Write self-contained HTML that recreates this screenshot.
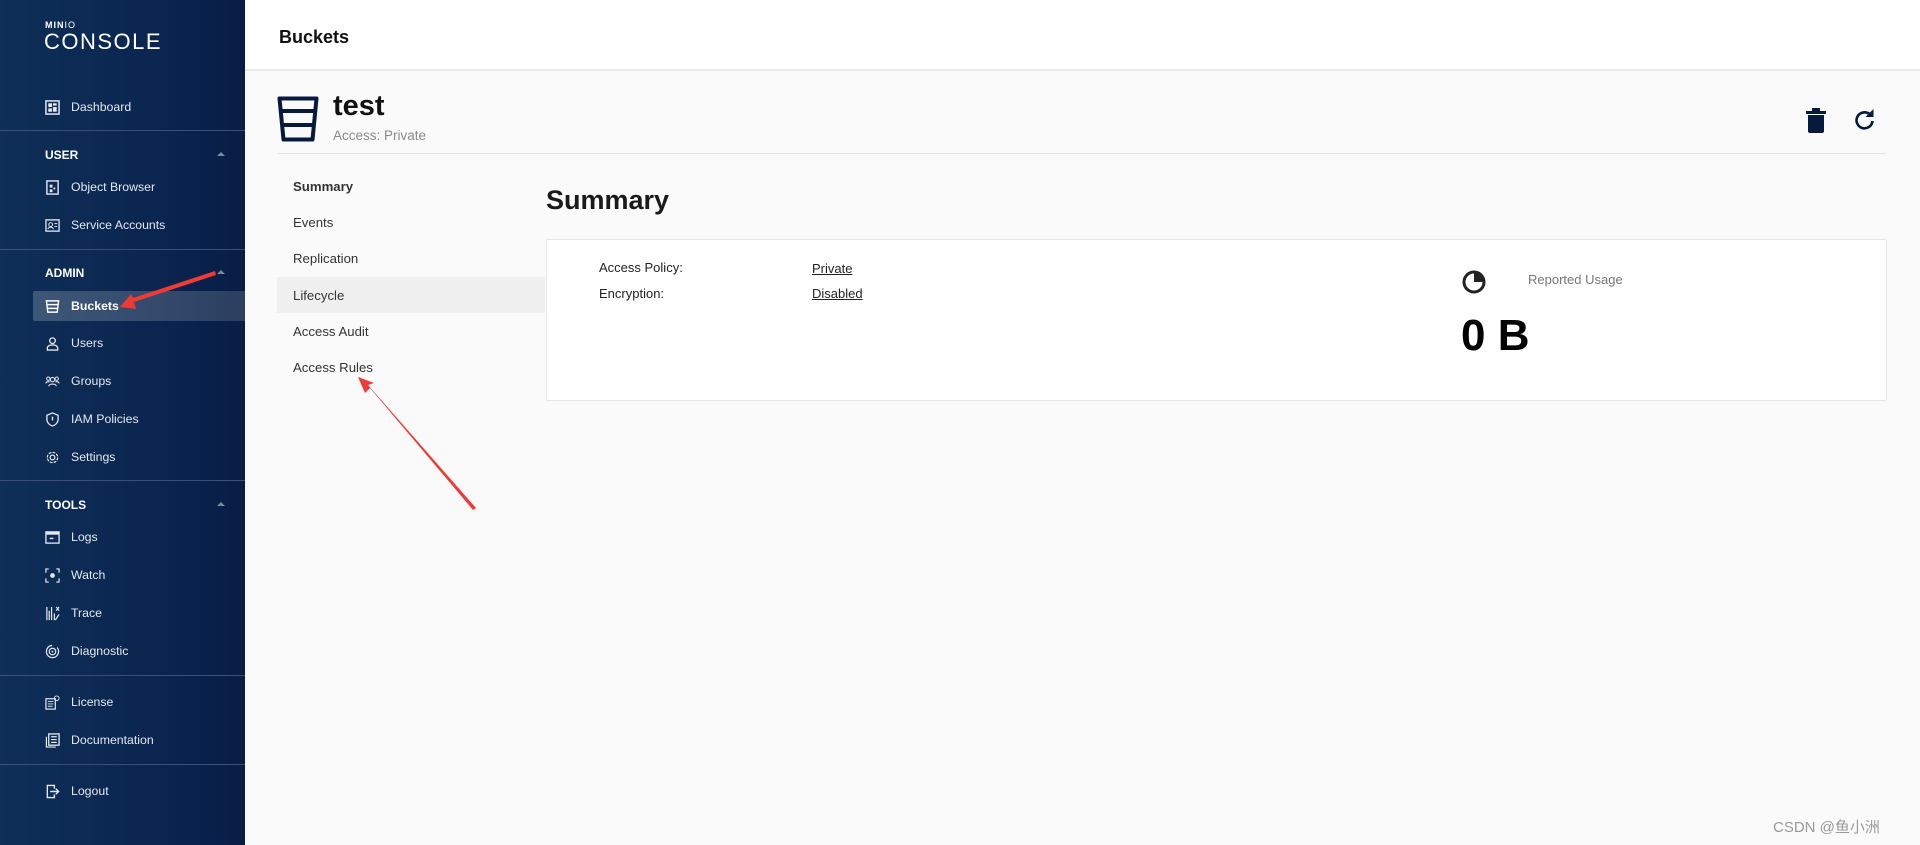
<!DOCTYPE html>
<html><head><meta charset="utf-8"><style>
*{margin:0;padding:0;box-sizing:border-box}
body{width:1920px;height:845px;overflow:hidden;background:#fafafa;font-family:"Liberation Sans","Noto Sans CJK SC",sans-serif;position:relative;color:#222}
.sb{position:absolute;left:0;top:0;width:245px;height:845px;background:linear-gradient(90deg,#0e2f57 0%,#0a2650 60%,#081d45 100%)}
.logo1{position:absolute;left:45px;top:20px;color:#fff;font-size:9px;font-weight:bold;letter-spacing:1px}
.logo2{position:absolute;left:44px;top:29px;color:#fff;font-size:22px;letter-spacing:1.5px}
.it{position:absolute;left:45px;color:#e4e8ef;font-size:12.3px;height:20px;line-height:20px;display:flex;align-items:center}
.it svg{width:15px;height:15px;margin-right:11px;flex:none}
.sec{position:absolute;left:45px;color:#fff;font-size:12px;font-weight:bold}
.car{position:absolute;left:217px;width:0;height:0;border-left:4px solid transparent;border-right:4px solid transparent;border-bottom:4px solid #7b8aa3}
.dv{position:absolute;left:0;width:245px;height:1px;background:#3a5175}
.hl{position:absolute;left:33px;top:291px;width:212px;height:30px;background:linear-gradient(90deg,rgba(255,255,255,.2),rgba(255,255,255,.15));border-radius:2px 0 0 2px}
.hdr{position:absolute;left:245px;top:0;right:0;height:71px;background:#fff;border-bottom:2px solid #e8e8e8}
.tab{position:absolute;left:293px;font-size:13.2px;color:#333}
a{color:#222;text-decoration:underline}
</style></head><body>
<div class="sb">
<div class="logo1">MIN<span style="font-weight:normal">IO</span></div>
<div class="logo2">CONSOLE</div>
<div class="hl"></div>
<div class="it" style="top:97px"><svg viewBox="0 0 16 16"><rect x="1" y="1" width="14" height="14" fill="none" stroke="#e4e8ef" stroke-width="1.6"/><rect x="3.5" y="3.5" width="4" height="4" fill="#e4e8ef"/><rect x="8.5" y="3.5" width="4" height="2.5" fill="#e4e8ef"/><rect x="3.5" y="9" width="4" height="3.5" fill="#e4e8ef"/><rect x="8.5" y="7.5" width="4" height="5" fill="#e4e8ef"/></svg>Dashboard</div>
<div class="dv" style="top:130px"></div>
<div class="sec" style="top:148px">USER</div><div class="car" style="top:152px"></div>
<div class="it" style="top:177px"><svg viewBox="0 0 16 16"><rect x="2" y="1" width="12" height="14" fill="none" stroke="#e4e8ef" stroke-width="1.5"/><rect x="5" y="5" width="3" height="3" fill="#e4e8ef"/><rect x="9" y="8" width="2" height="2" fill="#e4e8ef"/><rect x="5" y="10" width="3" height="3" fill="#e4e8ef"/></svg>Object Browser</div>
<div class="it" style="top:215px"><svg viewBox="0 0 16 16"><rect x="1" y="2" width="14" height="12" fill="none" stroke="#e4e8ef" stroke-width="1.4"/><circle cx="6" cy="7" r="2" fill="none" stroke="#e4e8ef"/><path d="M3 12c1-3 5-3 6 0M10 6h3M10 9h3" stroke="#e4e8ef" fill="none"/></svg>Service Accounts</div>
<div class="dv" style="top:249px"></div>
<div class="sec" style="top:266px">ADMIN</div><div class="car" style="top:270px"></div>
<div class="it" style="top:296px;color:#fff;font-weight:bold"><svg viewBox="0 0 16 16"><path d="M1.5 2h13l-1.5 12h-10z M2 6h12 M2.5 10h11" fill="none" stroke="#fff" stroke-width="1.5"/></svg>Buckets</div>
<div class="it" style="top:333px"><svg viewBox="0 0 16 16"><circle cx="8" cy="5" r="3" fill="none" stroke="#e4e8ef" stroke-width="1.4"/><path d="M2.5 15v-2c0-2 2-3.5 5.5-3.5s5.5 1.5 5.5 3.5v2z" fill="none" stroke="#e4e8ef" stroke-width="1.4"/></svg>Users</div>
<div class="it" style="top:371px"><svg viewBox="0 0 16 16"><circle cx="8" cy="6" r="2.3" fill="none" stroke="#e4e8ef" stroke-width="1.2"/><circle cx="3.5" cy="5" r="1.8" fill="none" stroke="#e4e8ef"/><circle cx="12.5" cy="5" r="1.8" fill="none" stroke="#e4e8ef"/><path d="M4 13c0-3 8-3 8 0M1 10c0-2 3-2 4-1.5M15 10c0-2-3-2-4-1.5" fill="none" stroke="#e4e8ef" stroke-width="1.2"/></svg>Groups</div>
<div class="it" style="top:409px"><svg viewBox="0 0 16 16"><path d="M8 1l6 2.5v4c0 4-3 6.5-6 7.5-3-1-6-3.5-6-7.5v-4z" fill="none" stroke="#e4e8ef" stroke-width="1.4"/><path d="M8 5v4" stroke="#e4e8ef" stroke-width="1.5"/></svg>IAM Policies</div>
<div class="it" style="top:447px"><svg viewBox="0 0 16 16"><circle cx="8" cy="8" r="2.5" fill="none" stroke="#e4e8ef" stroke-width="1.3"/><circle cx="8" cy="8" r="5.5" fill="none" stroke="#e4e8ef" stroke-width="1.3" stroke-dasharray="3 1.3"/></svg>Settings</div>
<div class="dv" style="top:480px"></div>
<div class="sec" style="top:498px">TOOLS</div><div class="car" style="top:502px"></div>
<div class="it" style="top:527px"><svg viewBox="0 0 16 16"><rect x="1" y="2" width="14" height="12" fill="none" stroke="#e4e8ef" stroke-width="1.4"/><rect x="1" y="2" width="14" height="3" fill="#e4e8ef"/><path d="M5 9h4" stroke="#e4e8ef" stroke-width="1.5"/></svg>Logs</div>
<div class="it" style="top:565px"><svg viewBox="0 0 16 16"><path d="M1 5V1h3M12 1h3v4M15 11v4h-3M4 15H1v-4" fill="none" stroke="#e4e8ef" stroke-width="1.3"/><circle cx="8" cy="8" r="2.5" fill="#e4e8ef"/></svg>Watch</div>
<div class="it" style="top:603px"><svg viewBox="0 0 16 16"><path d="M2 1v14M4.5 5v10M7 1v14M10 8v7M12 1l3 4M12 5l3-4M11 15l4-6" stroke="#e4e8ef" stroke-width="1.3" fill="none"/></svg>Trace</div>
<div class="it" style="top:641px"><svg viewBox="0 0 16 16"><circle cx="8" cy="8" r="6.5" fill="none" stroke="#e4e8ef" stroke-width="1.3" stroke-dasharray="30 6"/><circle cx="8" cy="8" r="3.5" fill="none" stroke="#e4e8ef" stroke-width="1.3"/><circle cx="8" cy="8" r="1" fill="#e4e8ef"/></svg>Diagnostic</div>
<div class="dv" style="top:675px"></div>
<div class="it" style="top:692px"><svg viewBox="0 0 16 16"><rect x="1" y="4" width="10" height="11" fill="none" stroke="#e4e8ef" stroke-width="1.3"/><path d="M3 7h6M3 9.5h6M3 12h5" stroke="#e4e8ef"/><circle cx="12.5" cy="3.5" r="2.5" fill="none" stroke="#e4e8ef"/></svg>License</div>
<div class="it" style="top:730px"><svg viewBox="0 0 16 16"><rect x="4" y="1" width="11" height="12" fill="none" stroke="#e4e8ef" stroke-width="1.4"/><path d="M6.5 4h6M6.5 7h6M6.5 10h6M1.5 4v11h10" stroke="#e4e8ef" stroke-width="1.3" fill="none"/></svg>Documentation</div>
<div class="dv" style="top:764px"></div>
<div class="it" style="top:781px"><svg viewBox="0 0 16 16"><path d="M10 5V1.5H2.5v13H10V11" fill="none" stroke="#e4e8ef" stroke-width="1.5"/><path d="M5.5 8h9M11.5 5l3 3-3 3" fill="none" stroke="#e4e8ef" stroke-width="1.5"/></svg>Logout</div>
</div>

<div class="hdr"><div style="position:absolute;left:34px;top:27px;font-size:18px;font-weight:bold;color:#111">Buckets</div></div>

<svg style="position:absolute;left:277px;top:96px" width="42" height="46" viewBox="0 0 42 46"><path d="M2.5 2.5h37l-4 41h-29z M3.5 15h35 M4.8 29h32.4" fill="none" stroke="#071a3d" stroke-width="4" stroke-linejoin="round"/></svg>
<div style="position:absolute;left:333px;top:90px;font-size:29px;font-weight:bold;color:#111">test</div>
<div style="position:absolute;left:333px;top:128px;font-size:13.5px;color:#8a8a8a">Access: Private</div>
<svg style="position:absolute;left:1806px;top:108px" width="20" height="26" viewBox="0 0 20 26"><rect x="0" y="3" width="20" height="3" fill="#071a3d"/><rect x="6" y="0" width="8" height="3" fill="#071a3d"/><path d="M2 7h16v16a2 2 0 0 1-2 2H4a2 2 0 0 1-2-2z" fill="#071a3d"/></svg>
<svg style="position:absolute;left:1853px;top:107px" width="24" height="27" viewBox="0 0 24 27"><path d="M17 7.5A8 8 0 1 0 19.5 14" fill="none" stroke="#071a3d" stroke-width="2.6"/><path d="M20.5 2v8h-8z" fill="#071a3d"/></svg>
<div style="position:absolute;left:277px;top:153px;width:1609px;height:1px;background:#e5e5e5"></div>

<div style="position:absolute;left:277px;top:277px;width:268px;height:36px;background:#efefef"></div>
<div class="tab" style="top:179px;font-weight:bold">Summary</div>
<div class="tab" style="top:215px">Events</div>
<div class="tab" style="top:251px">Replication</div>
<div class="tab" style="top:288px">Lifecycle</div>
<div class="tab" style="top:324px">Access Audit</div>
<div class="tab" style="top:360px">Access Rules</div>

<div style="position:absolute;left:546px;top:185px;font-size:27px;font-weight:bold;color:#1a1a1a">Summary</div>
<div style="position:absolute;left:546px;top:239px;width:1341px;height:162px;background:#fff;border:1px solid #e6e6e6;border-radius:2px"></div>
<div style="position:absolute;left:599px;top:260px;font-size:13px;color:#222">Access Policy:</div>
<div style="position:absolute;left:599px;top:286px;font-size:13px;color:#222">Encryption:</div>
<div style="position:absolute;left:812px;top:261px;font-size:13px"><a>Private</a></div>
<div style="position:absolute;left:812px;top:286px;font-size:13px"><a>Disabled</a></div>
<svg style="position:absolute;left:1462px;top:270px" width="24" height="24" viewBox="0 0 24 24"><circle cx="12" cy="12" r="10" fill="none" stroke="#222" stroke-width="3"/><path d="M12 2v10h10A10 10 0 0 0 12 2z" fill="#222"/></svg>
<div style="position:absolute;left:1528px;top:272px;font-size:13px;color:#777">Reported Usage</div>
<div style="position:absolute;left:1461px;top:311px;font-size:44px;font-weight:bold;color:#000">0 B</div>

<svg style="position:absolute;left:0;top:0" width="1920" height="845"><g fill="#ee3b36"><polygon points="215,271 216,275 134,302 136,309 120,307 131,294 133,298"/><polygon points="476,508 473,510 370,388 365,393 358,377 374,383 368,385"/></g></svg>

<div style="position:absolute;left:1773px;top:816px;font-size:15px;color:#999">CSDN @鱼小洲</div>
</body></html>
